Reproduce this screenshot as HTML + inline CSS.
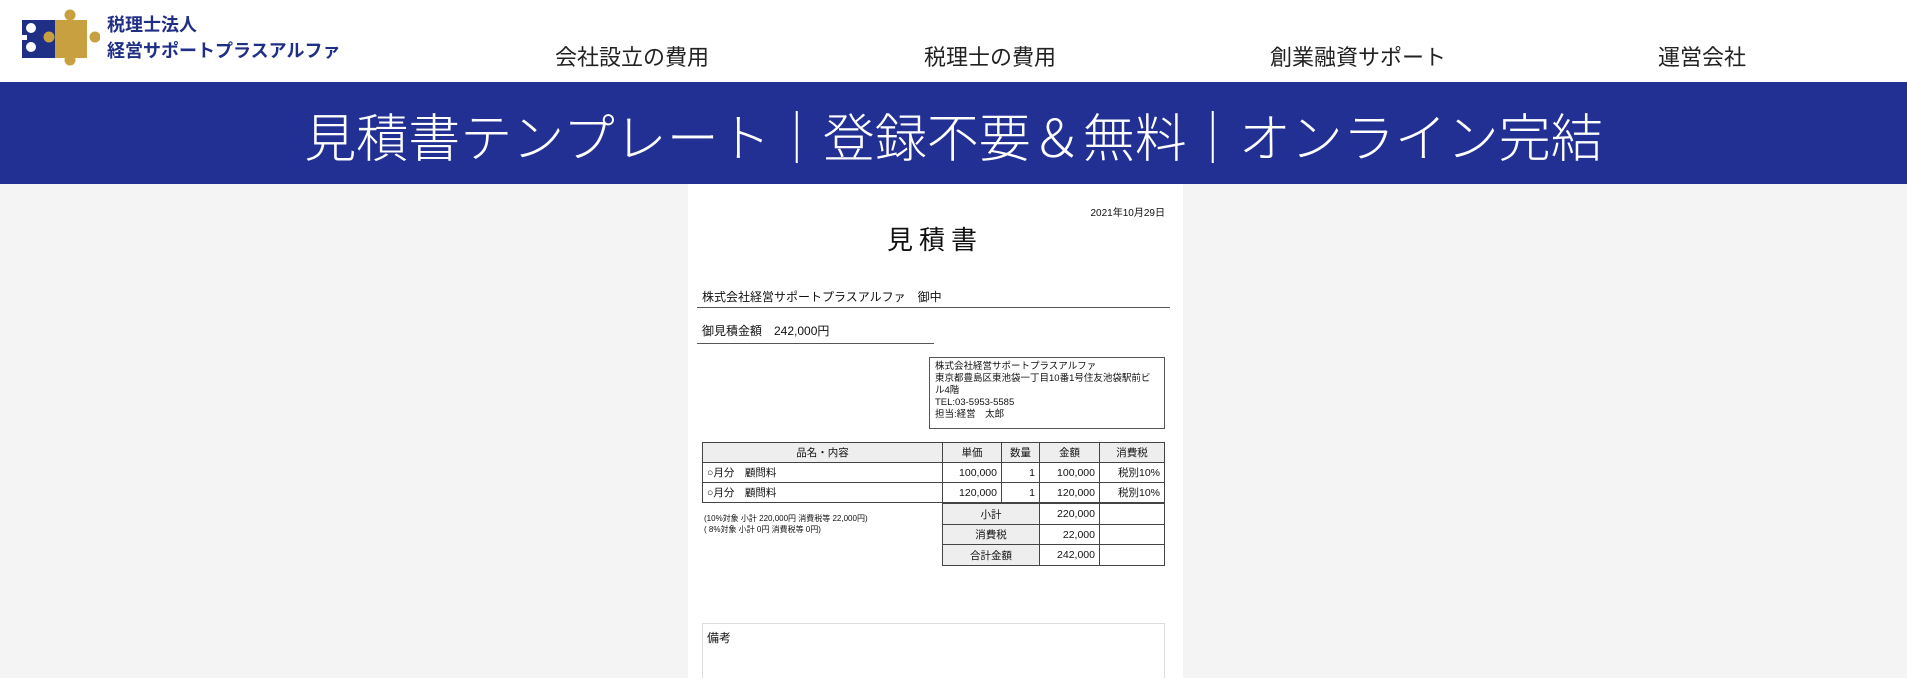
<!DOCTYPE html>
<html><head><meta charset="utf-8"><style>
*{margin:0;padding:0;box-sizing:border-box}
body{width:1907px;height:693px;overflow:hidden;background:#fff;font-family:"Liberation Sans","Noto Sans CJK JP",sans-serif;position:relative;color:#111}
.a{position:absolute}
.nav{font-size:22px;color:#222;top:40px;transform:translateX(-50%);white-space:nowrap}
.ban{top:82px;left:0;width:1907px;height:102px;background:#222f93;color:#fff;font-size:52px;text-align:center;line-height:116px;font-weight:300}
.gray{top:184px;left:0;width:1907px;height:494px;background:#f4f4f4}
.doc{top:184px;left:688px;width:495px;height:494px;background:#fff}
table{border-collapse:collapse;position:absolute;font-size:10.5px}
td{border:1px solid #444;height:20px;padding:0 4px}
.h td{background:#eee;text-align:center}
.r{text-align:right}
</style></head><body>
<svg class="a" style="left:10px;top:5px" width="90" height="65" viewBox="10 5 90 65">
<rect x="55" y="20" width="32" height="38" fill="#c9a03f"/>
<circle cx="70" cy="15" r="5.5" fill="#c9a03f"/><circle cx="95" cy="37" r="5.5" fill="#c9a03f"/><circle cx="70" cy="60" r="5.5" fill="#c9a03f"/>
<rect x="22" y="20" width="33" height="38" fill="#1f2f86"/>
<circle cx="49" cy="37" r="5.5" fill="#c9a03f"/>
<circle cx="31" cy="28" r="5" fill="#fff"/><circle cx="31" cy="47" r="5" fill="#fff"/><rect x="22" y="35" width="5" height="5" fill="#fff"/>
</svg>
<div class="a" style="left:107px;top:12px;font-size:18px;font-weight:bold;color:#1f2f86;line-height:26px">税理士法人<br>経営サポートプラスアルファ</div>
<div class="a nav" style="left:632px">会社設立の費用</div>
<div class="a nav" style="left:990px">税理士の費用</div>
<div class="a nav" style="left:1358px">創業融資サポート</div>
<div class="a nav" style="left:1702px">運営会社</div>
<div class="a ban">見積書テンプレート｜登録不要＆無料｜オンライン完結</div>
<div class="a gray"></div>
<div class="a doc"></div>
<div class="a" style="left:1090px;top:204px;width:75px;text-align:right;font-size:10px">2021年10月29日</div>
<div class="a" style="left:835px;top:220px;width:200px;text-align:center;font-size:26px;letter-spacing:6px">見積書</div>
<div class="a" style="left:702px;top:288px;font-size:12px">株式会社経営サポートプラスアルファ　御中</div>
<div class="a" style="left:697px;top:307px;width:473px;border-top:1px solid #555"></div>
<div class="a" style="left:702px;top:322px;font-size:12px">御見積金額　242,000円</div>
<div class="a" style="left:697px;top:343px;width:237px;border-top:1px solid #555"></div>
<div class="a" style="left:929px;top:357px;width:236px;height:72px;border:1px solid #555;font-size:9.5px;padding:3px 5px;line-height:12px">株式会社経営サポートプラスアルファ<br>東京都豊島区東池袋一丁目10番1号住友池袋駅前ビル4階<br>TEL:03-5953-5585<br>担当:経営　太郎</div>
<table style="left:702px;top:442px;width:463px">
<tr class="h"><td style="width:240px">品名・内容</td><td style="width:59px">単価</td><td style="width:38px">数量</td><td style="width:60px">金額</td><td>消費税</td></tr>
<tr><td>○月分　顧問料</td><td class="r">100,000</td><td class="r">1</td><td class="r">100,000</td><td class="r">税別10%</td></tr>
<tr><td>○月分　顧問料</td><td class="r">120,000</td><td class="r">1</td><td class="r">120,000</td><td class="r">税別10%</td></tr>
</table>
<table style="left:942px;top:503px;width:223px">
<tr><td style="width:97px;background:#eee;text-align:center;height:21px">小計</td><td class="r" style="width:60px">220,000</td><td></td></tr>
<tr><td style="background:#eee;text-align:center;height:20px">消費税</td><td class="r">22,000</td><td></td></tr>
<tr><td style="background:#eee;text-align:center;height:21px">合計金額</td><td class="r">242,000</td><td></td></tr>
</table>
<div class="a" style="left:704px;top:513px;font-size:8px;line-height:11px">(10%対象 小計 220,000円 消費税等 22,000円)<br>( 8%対象 小計 0円 消費税等 0円)</div>
<div class="a" style="left:702px;top:623px;width:463px;height:60px;border:1px solid #ddd;font-size:12px;padding:5px 4px">備考</div>
<div class="a" style="left:0;top:678px;width:1907px;height:15px;background:#fff"></div>
</body></html>
